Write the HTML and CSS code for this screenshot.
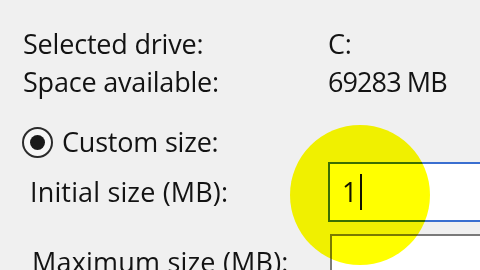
FILE: index.html
```html
<!DOCTYPE html>
<html>
<head>
<meta charset="utf-8">
<link rel="stylesheet" href="styles.css">
</head>
<body>
<div class="dialog">
  <div class="info">
    <span>Selected drive:</span><span>C:</span>
    <span>Space available:</span><span class="num">69283 MB</span>
  </div>
  <div class="radio-row">
    <span class="radio"><span class="dot"></span></span>
    <span>Custom size:</span>
  </div>
  <div class="field-row first">
    <span class="label">Initial size (MB):</span>
    <div class="input active"><span class="value">1</span><span class="caret"></span></div>
  </div>
  <div class="field-row second">
    <span class="label">Maximum size (MB):</span>
    <div class="input"></div>
  </div>
  <div class="highlight"></div>
</div>
</body>
</html>
```
FILE: styles.css
```css
html, body {
  margin: 0;
  padding: 0;
  width: 480px;
  height: 270px;
  overflow: hidden;
  background: #f0f0f0;
}
.dialog {
  position: relative;
  width: 480px;
  height: 270px;
  overflow: hidden;
  font-family: "Open Sans", "Noto Sans", sans-serif;
  font-size: 27px;
  letter-spacing: -0.2px;
  line-height: 38px;
  color: #131313;
}
.info {
  display: grid;
  grid-template-columns: 305px auto;
  padding: 25px 0 0 23px;
}
.num {
  letter-spacing: -0.9px;
}
.radio-row {
  display: flex;
  align-items: center;
  gap: 9px;
  margin-top: 22px;
  padding-left: 22px;
}
.radio {
  width: 27px;
  height: 27px;
  border: 2px solid #2b2b2b;
  border-radius: 50%;
  display: flex;
  align-items: center;
  justify-content: center;
  background: #f7f7f7;
}
.dot {
  width: 15px;
  height: 15px;
  border-radius: 50%;
  background: #1a1a1a;
}
.field-row {
  display: grid;
  grid-template-columns: 298px 220px;
  align-items: center;
  height: 60px;
}
.field-row .label {
  letter-spacing: 0.15px;
}
.field-row.first {
  margin-top: 1px;
  padding-left: 30px;
}
.field-row.second {
  margin-top: 12px;
  padding-left: 32px;
}
.field-row.second .label {
  margin-top: -5px;
  letter-spacing: 0.2px;
}
.input {
  box-sizing: border-box;
  height: 60px;
  background: #ffffff;
  border: 2px solid #7a7a7a;
  display: flex;
  align-items: center;
  padding-left: 12px;
}
.input.active {
  border-color: #3a6fd0;
}
.value {
  line-height: 30px;
}
.caret {
  width: 2px;
  height: 36px;
  background: #111;
  margin-left: 3px;
}
.highlight {
  position: absolute;
  left: 290px;
  top: 125px;
  width: 140px;
  height: 140px;
  border-radius: 50%;
  background: #ffff00;
  mix-blend-mode: multiply;
}
```
